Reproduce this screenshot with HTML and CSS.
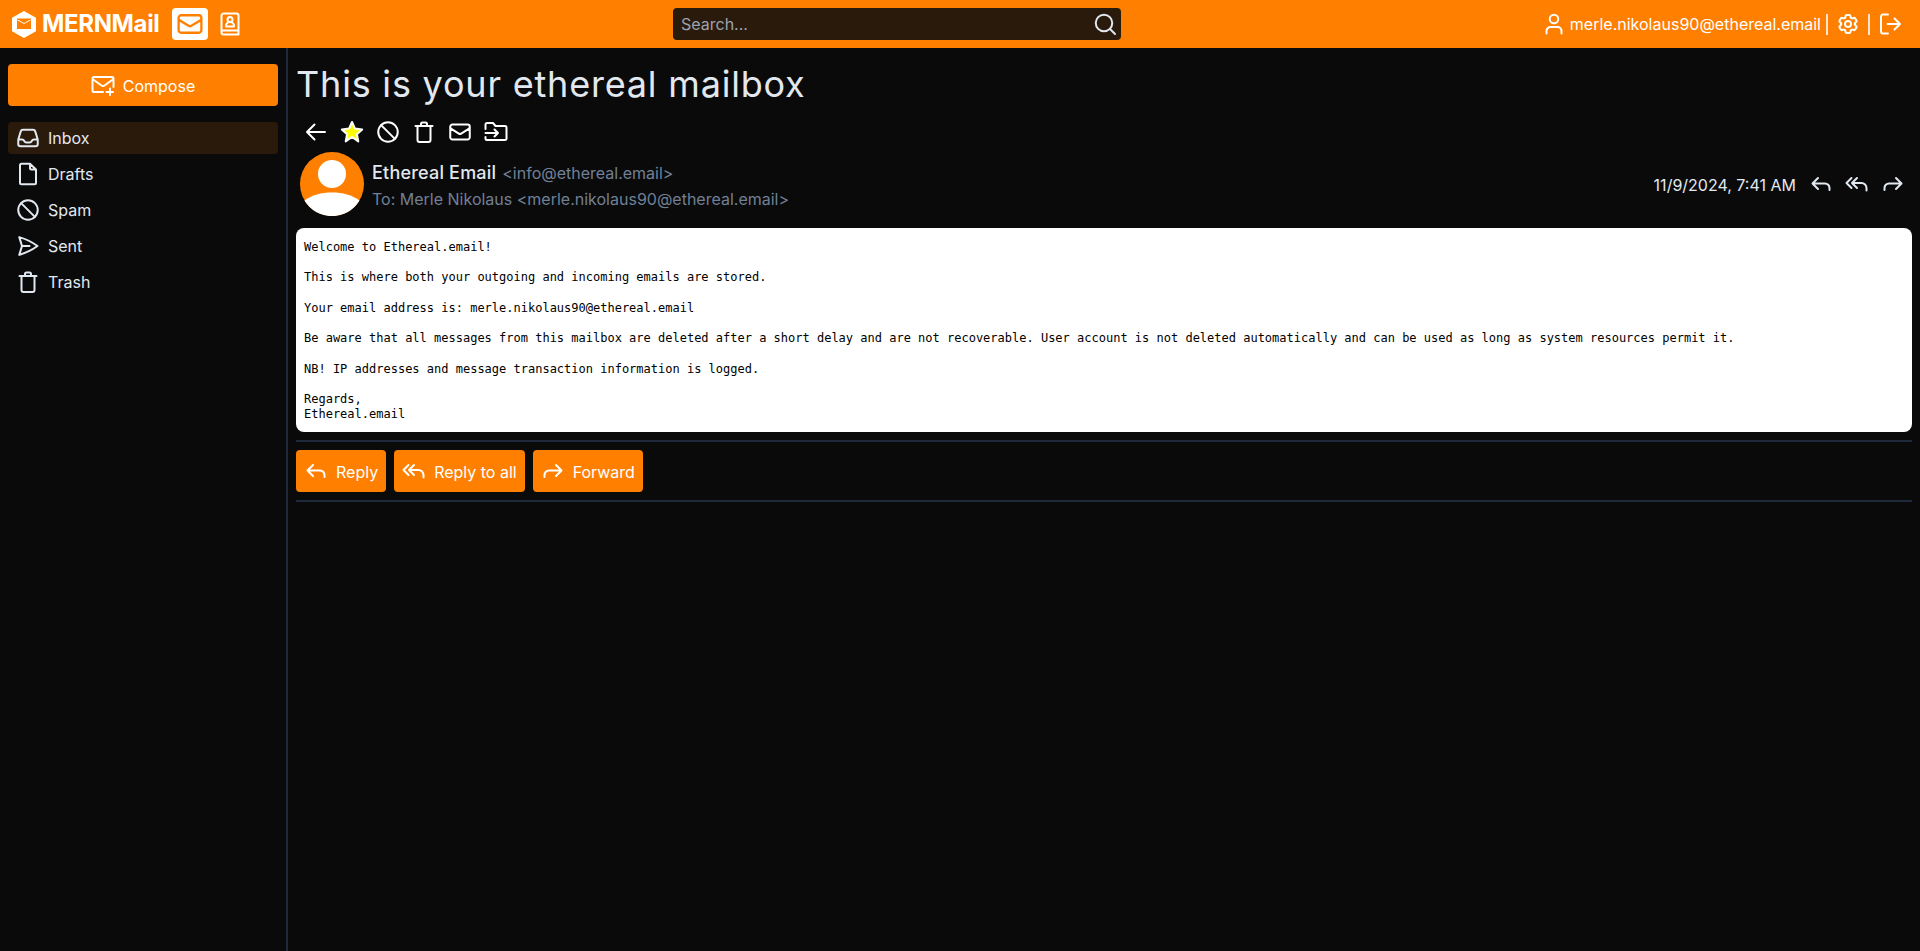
FILE: index.html
```html
<!DOCTYPE html>
<html lang="en">
<head>
    <meta charset="UTF-8">
    <meta name="viewport" content="width=device-width, initial-scale=1.0">
    <title>MERNMail</title>
    <link rel="stylesheet" href="styles.css">
</head>
<body>
    <svg class="defs" aria-hidden="true">
        <defs>
            <symbol id="i-mail" viewBox="0 0 24 24"><path d="M21.750 6.750v10.500a2.250 2.250 0 0 1-2.250 2.250h-15a2.250 2.250 0 0 1-2.250-2.250V6.750m19.500 0A2.250 2.250 0 0 0 19.500 4.500h-15a2.250 2.250 0 0 0-2.250 2.250m19.500 0v.243a2.250 2.250 0 0 1-1.070 1.916l-7.500 4.615a2.250 2.250 0 0 1-2.360 0L3.320 8.910a2.250 2.250 0 0 1-1.070-1.916V6.750"/></symbol>
            <symbol id="i-ban" viewBox="0 0 24 24"><circle cx="12" cy="12" r="9.750"/><path d="M5.100 5.100l13.800 13.800"/></symbol>
            <symbol id="i-trash" viewBox="0 0 24 24"><path d="M3.500 6h17M9 6V4a1.500 1.500 0 0 1 1.500-1.500h3A1.500 1.500 0 0 1 15 4v2M5.500 6v14a2 2 0 0 0 2 2h9a2 2 0 0 0 2-2V6"/></symbol>
            <symbol id="i-reply" viewBox="0 0 24 24"><path d="M9 6 3.500 11.500 9 17M3.500 11.500H16a4.500 4.500 0 0 1 4.500 4.500v2"/></symbol>
            <symbol id="i-reply-all" viewBox="0 0 24 24"><path d="M12 6 7 11l5 5M7 11h9.500a5 5 0 0 1 5 5v2.500M6.500 6 1.500 11l5 5"/></symbol>
            <symbol id="i-forward" viewBox="0 0 24 24"><path d="M15 6l5.500 5.500L15 17M20.500 11.500H8a4.500 4.500 0 0 0-4.500 4.500v2"/></symbol>
        </defs>
    </svg>

    <header class="topbar">
        <div class="topbar-left">
            <a class="logo">
                <svg class="logo-icon" viewBox="0 0 24 27"><path class="logo-hex" d="M12 0l12 6.750v13.500L12 27 0 20.250V6.750z"/><path class="logo-env" d="M5 7.500h14v10.500H5z"/><path class="logo-flap" d="M5.500 9l6.500 3.500L18.500 9"/></svg>
                <span>MERNMail</span>
            </a>
            <a class="app-tab active"><svg class="ic ic-28"><use href="#i-mail"/></svg></a>
            <a class="app-tab">
                <svg class="ic ic-24" viewBox="0 0 24 24"><path d="M3.500 20V3.500a2 2 0 0 1 2-2h13a2 2 0 0 1 2 2v19h-15a2 2 0 0 1-2-2v-.500A1.500 1.500 0 0 1 5 18.500h15.500"/><circle cx="12" cy="7.500" r="2.500"/><path d="M8 14.500v-.500a4 4 0 0 1 8 0v.500z"/></svg>
            </a>
        </div>
        <div class="search">
            <input type="text" placeholder="Search...">
            <svg class="ic ic-24" viewBox="0 0 24 24"><circle cx="11" cy="11" r="8.250"/><path d="M17 17l5 5"/></svg>
        </div>
        <div class="topbar-right">
            <svg class="ic ic-24 user-icon" viewBox="0 0 24 24"><circle cx="12" cy="7" r="4.250"/><path d="M4.500 21.500V19a4 4 0 0 1 4-4h7a4 4 0 0 1 4 4v2.500"/></svg>
            <span class="user-mail">merle.nikolaus90@ethereal.email</span>
            <span class="sep"></span>
            <svg class="ic ic-24" viewBox="0 0 24 24"><path d="M9.594 3.940c.090-.542.560-.940 1.110-.940h2.593c.550 0 1.020.398 1.110.940l.213 1.281c.063.374.313.686.645.870.074.040.147.083.220.127.325.196.720.257 1.075.124l1.217-.456a1.125 1.125 0 0 1 1.370.490l1.296 2.247a1.125 1.125 0 0 1-.260 1.431l-1.003.827c-.293.241-.438.613-.430.992a7.723 7.723 0 0 1 0 .255c-.008.378.137.750.430.991l1.004.827c.424.350.534.955.260 1.430l-1.298 2.247a1.125 1.125 0 0 1-1.369.491l-1.217-.456c-.355-.133-.750-.072-1.076.124a6.470 6.470 0 0 1-.220.128c-.331.183-.581.495-.644.869l-.213 1.281c-.090.543-.560.940-1.110.940h-2.594c-.550 0-1.019-.398-1.110-.940l-.213-1.281c-.062-.374-.312-.686-.644-.870a6.520 6.520 0 0 1-.220-.127c-.325-.196-.720-.257-1.076-.124l-1.217.456a1.125 1.125 0 0 1-1.369-.490l-1.297-2.247a1.125 1.125 0 0 1 .260-1.431l1.004-.827c.292-.240.437-.613.430-.991a6.932 6.932 0 0 1 0-.255c.007-.380-.138-.751-.430-.992l-1.004-.827a1.125 1.125 0 0 1-.260-1.430l1.297-2.247a1.125 1.125 0 0 1 1.370-.491l1.216.456c.356.133.751.072 1.076-.124.072-.044.146-.086.220-.128.332-.183.582-.495.644-.869l.214-1.280Z"/><circle cx="12" cy="12" r="3"/></svg>
            <span class="sep"></span>
            <svg class="ic ic-24" viewBox="0 0 24 24"><path d="M10 2.500H5a2 2 0 0 0-2 2v15a2 2 0 0 0 2 2h5M9.500 12h12M16.500 6.500l5.500 5.500-5.500 5.500"/></svg>
        </div>
    </header>

    <div class="layout">
        <aside class="sidebar">
            <button class="compose" type="button">
                <svg class="ic ic-24" viewBox="0 0 24 24"><path d="M12 19H3a1.500 1.500 0 0 1-1.500-1.500v-12A1.500 1.500 0 0 1 3 4h18a1.500 1.500 0 0 1 1.500 1.500V14M1.500 6l9 6.500a2.500 2.500 0 0 0 3 0l9-6.500M19 15.500V22M15.500 19H22"/></svg>
                <span>Compose</span>
            </button>
            <nav class="folders">
                <a class="folder active">
                    <svg class="ic ic-24" viewBox="0 0 24 24"><path d="M2.250 13.500h3.860a2.250 2.250 0 0 1 2.012 1.244l.256.512a2.250 2.250 0 0 0 2.013 1.244h3.218a2.250 2.250 0 0 0 2.013-1.244l.256-.512a2.250 2.250 0 0 1 2.013-1.244h3.859m-19.500.338V18a2.250 2.250 0 0 0 2.250 2.250h15A2.250 2.250 0 0 0 21.750 18v-4.162c0-.224-.034-.447-.100-.661L19.240 5.338A2.250 2.250 0 0 0 17.088 3.750H6.912a2.250 2.250 0 0 0-2.150 1.588L2.350 13.177a2.250 2.250 0 0 0-.100.661Z"/></svg>
                    Inbox
                </a>
                <a class="folder">
                    <svg class="ic ic-24" viewBox="0 0 24 24"><path d="M14 1.750H5.500A1.500 1.500 0 0 0 4 3.250v17.500a1.500 1.500 0 0 0 1.500 1.500h13a1.500 1.500 0 0 0 1.500-1.500V7.500h-4.500a1.500 1.500 0 0 1-1.500-1.500V1.750L20 7.500"/></svg>
                    Drafts
                </a>
                <a class="folder"><svg class="ic ic-24"><use href="#i-ban"/></svg>Spam</a>
                <a class="folder">
                    <svg class="ic ic-24" viewBox="0 0 24 24"><path d="M6 12 3.269 3.125A59.769 59.769 0 0 1 21.485 12 59.768 59.768 0 0 1 3.270 20.875L5.999 12Zm0 0h7.500"/></svg>
                    Sent
                </a>
                <a class="folder"><svg class="ic ic-24"><use href="#i-trash"/></svg>Trash</a>
            </nav>
        </aside>

        <main class="message">
            <h1>This is your ethereal mailbox</h1>
            <div class="msg-actions">
                <svg class="ic ic-24" viewBox="0 0 24 24"><path d="M10.500 19.500 3 12l7.500-7.500M3 12h18"/></svg>
                <svg class="ic ic-24 star" viewBox="0 0 24 24"><path d="M12 2l3 6.600 7.200.800-5.300 4.900 1.400 7.100L12 17l-6.300 4.400 1.400-7.100L1.800 9.400 9 8.600z"/></svg>
                <svg class="ic ic-24"><use href="#i-ban"/></svg>
                <svg class="ic ic-24"><use href="#i-trash"/></svg>
                <svg class="ic ic-24"><use href="#i-mail"/></svg>
                <svg class="ic ic-24" viewBox="0 0 24 24"><path d="M1.500 9V4.500a1.500 1.500 0 0 1 1.500-1.500h6l2.500 3H21a1.500 1.500 0 0 1 1.500 1.500v11.500A1.500 1.500 0 0 1 21 20H3a1.500 1.500 0 0 1-1.500-1.500V17M1.500 13H14M10.500 9.500 14 13l-3.500 3.500"/></svg>
            </div>
            <div class="msg-head">
                <svg class="avatar" viewBox="0 0 64 64"><circle class="avatar-bg" cx="32" cy="32" r="32"/><circle class="avatar-fg" cx="32" cy="22" r="14"/><path class="avatar-fg" d="M4.500 48.500C12 43 21 40.500 32 40.500s20 2.500 27.500 8A32 32 0 0 1 4.500 48.500z"/></svg>
                <div class="msg-people">
                    <div class="from">Ethereal Email <span class="muted">&lt;info@ethereal.email&gt;</span></div>
                    <div class="muted">To: Merle Nikolaus &lt;merle.nikolaus90@ethereal.email&gt;</div>
                </div>
                <div class="msg-meta">
                    <span class="msg-date">11/9/2024, 7:41 AM</span>
                    <svg class="ic ic-24"><use href="#i-reply"/></svg>
                    <svg class="ic ic-24"><use href="#i-reply-all"/></svg>
                    <svg class="ic ic-24"><use href="#i-forward"/></svg>
                </div>
            </div>
            <pre class="msg-body">Welcome to Ethereal.email!

This is where both your outgoing and incoming emails are stored.

Your email address is: merle.nikolaus90@ethereal.email

Be aware that all messages from this mailbox are deleted after a short delay and are not recoverable. User account is not deleted automatically and can be used as long as system resources permit it.

NB! IP addresses and message transaction information is logged.

Regards,
Ethereal.email</pre>
            <div class="msg-buttons">
                <button type="button"><svg class="ic ic-24"><use href="#i-reply"/></svg><span>Reply</span></button>
                <button type="button"><svg class="ic ic-24"><use href="#i-reply-all"/></svg><span>Reply to all</span></button>
                <button type="button"><svg class="ic ic-24"><use href="#i-forward"/></svg><span>Forward</span></button>
            </div>
        </main>
    </div>
</body>
</html>
```

FILE: styles.css
```css
* {
    box-sizing: border-box;
}
html, body {
    height: 100%;
}
body {
    margin: 0;
    background-color: #0a0a0a;
    color: #e2e8f0;
    font-family: Inter, "Liberation Sans", sans-serif;
    font-size: 16px;
    line-height: 24px;
    overflow: hidden;
}
.defs {
    display: none;
}
.ic {
    display: block;
    flex: none;
    fill: none;
    stroke: currentColor;
    stroke-width: 2;
    stroke-linecap: round;
    stroke-linejoin: round;
}
.ic-24 {
    width: 24px;
    height: 24px;
}
.ic-28 {
    width: 28px;
    height: 28px;
}

/* top bar */
.topbar {
    height: 48px;
    padding: 8px 18px 8px 12px;
    background-color: #ff8000;
    color: #fff;
    display: grid;
    grid-template-columns: 661px 448px 1fr;
    align-items: center;
}
.topbar-left {
    display: flex;
    align-items: center;
}
.logo {
    display: flex;
    align-items: center;
    gap: 6px;
    width: 160px;
    font-size: 24px;
    font-weight: 700;
    letter-spacing: -0.35px;
}
.logo-icon {
    width: 24px;
    height: 27px;
    flex: none;
}
.logo-hex {
    fill: #fff;
}
.logo-env {
    fill: #ff8000;
}
.logo-flap {
    fill: none;
    stroke: #fff;
    stroke-width: 1;
}
.app-tab {
    width: 36px;
    height: 32px;
    border-radius: 4px;
    display: flex;
    align-items: center;
    justify-content: center;
    margin-right: 4px;
}
.app-tab.active {
    background-color: #fff;
    color: #ff8000;
}
.search {
    height: 32px;
    border-radius: 4px;
    background-color: #2a1a0b;
    display: flex;
    align-items: center;
    padding: 0 4px 0 8px;
    color: #e2e8f0;
}
.search input {
    flex: 1;
    min-width: 0;
    background: none;
    border: none;
    outline: none;
    padding: 0;
    color: #e2e8f0;
    font: inherit;
}
.search input::placeholder {
    color: #9ca3af;
    opacity: 1;
}
.topbar-right {
    display: flex;
    align-items: center;
    justify-content: flex-end;
    gap: 8px;
}
.user-icon {
    margin-right: -4px;
}
.user-mail {
    margin-right: -3px;
}
.sep {
    width: 2px;
    height: 21px;
    background-color: #ffe6cc;
}

/* page */
.layout {
    display: flex;
    height: calc(100vh - 48px);
}
.sidebar {
    width: 288px;
    flex: none;
    padding: 16px 8px;
    border-right: 2px solid #1e293b;
}
.compose {
    width: 100%;
    height: 42px;
    border: none;
    border-radius: 4px;
    background-color: #ff8000;
    color: #fff;
    font: inherit;
    display: flex;
    align-items: center;
    justify-content: center;
    gap: 8px;
}
.compose span, .msg-buttons span {
    padding-top: 2px;
}
.folders {
    margin-top: 16px;
    display: flex;
    flex-direction: column;
    gap: 4px;
}
.folder {
    height: 32px;
    padding: 0 8px;
    border-radius: 4px;
    display: flex;
    align-items: center;
    gap: 8px;
}
.folder.active {
    background-color: #2a1a0b;
}

/* message */
.message {
    flex: 1;
    min-width: 0;
    padding: 8px 8px 0;
}
.message h1 {
    margin: 0;
    font-size: 36px;
    line-height: 56px;
    font-weight: 400;
    letter-spacing: 0.8px;
}
.msg-actions {
    display: flex;
    align-items: center;
    gap: 12px;
    padding: 8px 0 0 8px;
    height: 32px;
    color: #fff;
}
.star {
    fill: #ffff00;
    stroke: #fff;
}
.msg-head {
    display: flex;
    align-items: center;
    margin-top: 8px;
    padding: 0 4px;
}
.avatar {
    width: 64px;
    height: 64px;
    flex: none;
}
.avatar-bg {
    fill: #ff8000;
}
.avatar-fg {
    fill: #fff;
}
.msg-people {
    margin-left: 8px;
    flex: 1;
}
.from {
    padding-top: 1px;
    font-size: 18px;
    font-weight: 500;
    line-height: 28px;
    letter-spacing: 0.2px;
}
.from .muted {
    margin-left: 1px;
    font-size: 16px;
    font-weight: 400;
    letter-spacing: 0;
}
.muted {
    color: #718096;
}
.msg-meta {
    display: flex;
    align-items: center;
    gap: 12px;
    padding-right: 3px;
}
.msg-date {
    margin-right: 1px;
    padding-top: 2px;
}
.msg-body {
    margin: 12px 0 0;
    padding: 12px 8px;
    height: 204px;
    border-radius: 8px;
    background-color: #fff;
    color: #000;
    font-family: "DejaVu Sans Mono", monospace;
    font-size: 12px;
    line-height: 15.2px;
    white-space: pre-wrap;
}
.msg-buttons {
    margin-top: 8px;
    padding: 8px 0;
    border-top: 2px solid #1e293b;
    border-bottom: 2px solid #1e293b;
    display: flex;
    gap: 8px;
}
.msg-buttons button {
    height: 42px;
    padding: 0 8px;
    border: none;
    border-radius: 4px;
    background-color: #ff8000;
    color: #fff;
    font: inherit;
    display: flex;
    align-items: center;
    gap: 8px;
}
```
